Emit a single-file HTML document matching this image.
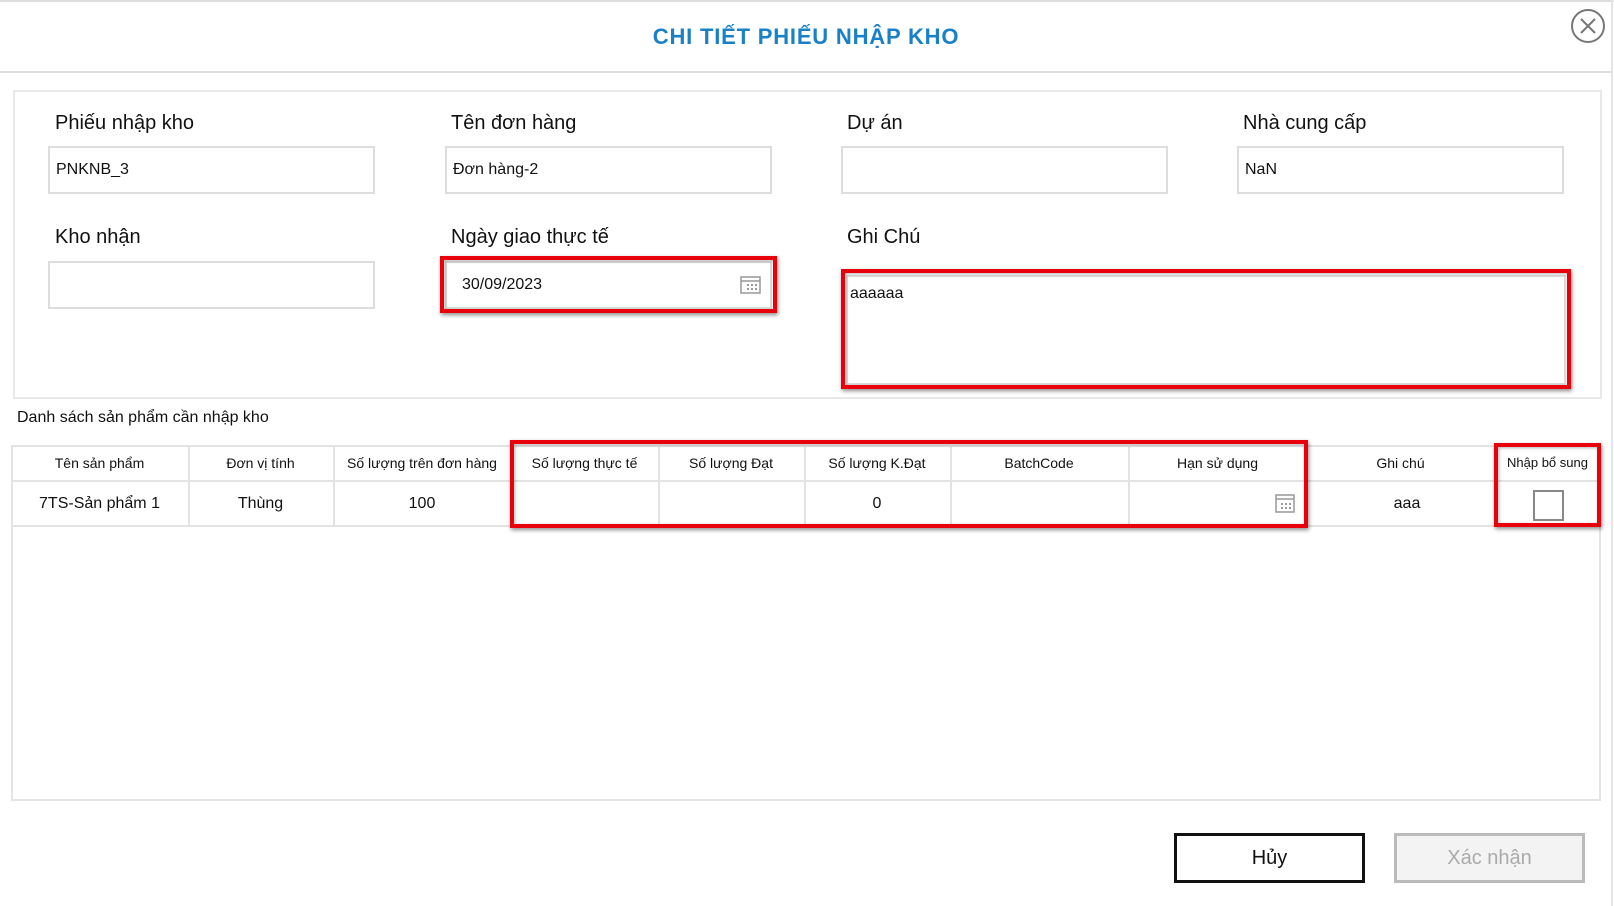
<!DOCTYPE html>
<html><head><meta charset="utf-8"><style>
*{box-sizing:border-box;margin:0;padding:0}
body{width:1614px;height:906px;background:#fff;font-family:"Liberation Sans",sans-serif;color:#111;position:relative;overflow:hidden}
.a{position:absolute}
.lbl{position:absolute;font-size:20px;color:#111}
.inp{position:absolute;border:2px solid #ddd;background:#fff;font-size:16px;padding-left:6px;line-height:44px;height:48px;width:327px}
.red{position:absolute;border:4px solid #e8000b;box-shadow:1px 2px 4px rgba(0,0,0,.45), inset 1px 1px 3px rgba(0,0,0,.3)}
.th{position:absolute;top:445px;height:36px;line-height:36px;text-align:center;font-size:14px}
.td{position:absolute;top:481px;height:45px;line-height:45px;text-align:center;font-size:16px}
.vl{position:absolute;top:445px;height:81px;width:2px;background:#e3e3e3}
</style></head><body>
<div class="a" style="left:0;top:0;width:1614px;height:2px;background:#ddd"></div>
<div class="a" style="left:1611px;top:0;width:2px;height:906px;background:#e5e5e5"></div>
<div class="a" style="left:0;top:71px;width:1612px;height:2px;background:#ddd"></div>
<div class="a" style="left:0;top:24px;width:1612px;text-align:center;font-size:22px;font-weight:bold;color:#1a80c8;letter-spacing:.8px">CHI TIẾT PHIẾU NHẬP KHO</div>
<svg class="a" style="left:1570px;top:8px" width="36" height="36" viewBox="0 0 36 36"><circle cx="18" cy="18" r="16" fill="none" stroke="#777" stroke-width="2"/><path d="M11 11L25 25M25 11L11 25" stroke="#777" stroke-width="2"/></svg>

<div class="a" style="left:13px;top:90px;width:1589px;height:309px;border:2px solid #e8e8e8"></div>
<div class="lbl" style="left:55px;top:112px">Phiếu nhập kho</div>
<div class="lbl" style="left:451px;top:112px">Tên đơn hàng</div>
<div class="lbl" style="left:847px;top:112px">Dự án</div>
<div class="lbl" style="left:1243px;top:112px">Nhà cung cấp</div>
<div class="inp" style="left:48px;top:146px">PNKNB_3</div>
<div class="inp" style="left:445px;top:146px">Đơn hàng-2</div>
<div class="inp" style="left:841px;top:146px"></div>
<div class="inp" style="left:1237px;top:146px">NaN</div>
<div class="lbl" style="left:55px;top:226px">Kho nhận</div>
<div class="lbl" style="left:451px;top:226px">Ngày giao thực tế</div>
<div class="lbl" style="left:847px;top:226px">Ghi Chú</div>
<div class="inp" style="left:48px;top:261px"></div>
<div class="inp" style="left:445px;top:261px;width:327px;padding-left:15px">30/09/2023</div>
<svg class="a" style="left:740px;top:276px" width="21" height="18" viewBox="0 0 21 18"><rect x="1" y="1" width="19" height="16" fill="none" stroke="#999" stroke-width="1.5"/><line x1="1" y1="5" x2="20" y2="5" stroke="#999" stroke-width="1.5"/><g fill="#999"><rect x="7" y="8" width="2" height="2"/><rect x="11" y="8" width="2" height="2"/><rect x="15" y="8" width="2" height="2"/><rect x="7" y="12" width="2" height="2"/><rect x="11" y="12" width="2" height="2"/><rect x="15" y="12" width="2" height="2"/></g></svg>
<div class="red" style="left:440px;top:256px;width:337px;height:57px"></div>
<div class="a" style="left:846px;top:275px;width:720px;height:110px;border:2px solid #ddd;font-size:16px;padding:8px 0 0 2px">aaaaaa</div>
<div class="red" style="left:841px;top:269px;width:730px;height:120px"></div>

<div class="a" style="left:17px;top:409px;font-size:16px">Danh sách sản phẩm cần nhập kho</div>
<div class="a" style="left:11px;top:445px;width:1590px;height:356px;border:2px solid #e3e3e3"></div>
<div class="a" style="left:11px;top:480px;width:1590px;height:2px;background:#e3e3e3"></div>
<div class="a" style="left:11px;top:525px;width:1590px;height:2px;background:#e3e3e3"></div>
<div class="vl" style="left:188px"></div><div class="vl" style="left:333px"></div><div class="vl" style="left:511px"></div><div class="vl" style="left:658px"></div><div class="vl" style="left:804px"></div><div class="vl" style="left:950px"></div><div class="vl" style="left:1128px"></div>
<div class="th" style="left:11px;width:177px">Tên sản phẩm</div>
<div class="th" style="left:188px;width:145px">Đơn vị tính</div>
<div class="th" style="left:333px;width:178px">Số lượng trên đơn hàng</div>
<div class="th" style="left:511px;width:147px">Số lượng thực tế</div>
<div class="th" style="left:658px;width:146px">Số lượng Đạt</div>
<div class="th" style="left:804px;width:146px">Số lượng K.Đạt</div>
<div class="th" style="left:950px;width:178px">BatchCode</div>
<div class="th" style="left:1128px;width:179px">Hạn sử dụng</div>
<div class="th" style="left:1307px;width:187px">Ghi chú</div>
<div class="th" style="left:1494px;width:107px;font-size:13px">Nhập bổ sung</div>
<div class="td" style="left:11px;width:177px">7TS-Sản phẩm 1</div>
<div class="td" style="left:188px;width:145px">Thùng</div>
<div class="td" style="left:333px;width:178px">100</div>
<div class="td" style="left:804px;width:146px">0</div>
<div class="td" style="left:1307px;width:200px">aaa</div>
<svg class="a" style="left:1275px;top:494px" width="20" height="19" viewBox="0 0 20 19"><rect x="1" y="1" width="18" height="17" fill="none" stroke="#999" stroke-width="1.5"/><line x1="1" y1="5" x2="19" y2="5" stroke="#999" stroke-width="1.5"/><g fill="#999"><rect x="6" y="9" width="2" height="2"/><rect x="10" y="9" width="2" height="2"/><rect x="14" y="9" width="2" height="2"/><rect x="6" y="13" width="2" height="2"/><rect x="10" y="13" width="2" height="2"/><rect x="14" y="13" width="2" height="2"/></g></svg>
<div class="a" style="left:1533px;top:490px;width:31px;height:31px;border:2px solid #888;background:#fff"></div>
<div class="red" style="left:510px;top:440px;width:798px;height:88px"></div>
<div class="red" style="left:1494px;top:443px;width:107px;height:84px"></div>

<div class="a" style="left:1174px;top:833px;width:191px;height:50px;border:3px solid #111;text-align:center;line-height:44px;font-size:20px">Hủy</div>
<div class="a" style="left:1394px;top:833px;width:191px;height:50px;border:3px solid #bbb;background:#f3f3f3;color:#aaa;text-align:center;line-height:44px;font-size:20px">Xác nhận</div>
</body></html>
